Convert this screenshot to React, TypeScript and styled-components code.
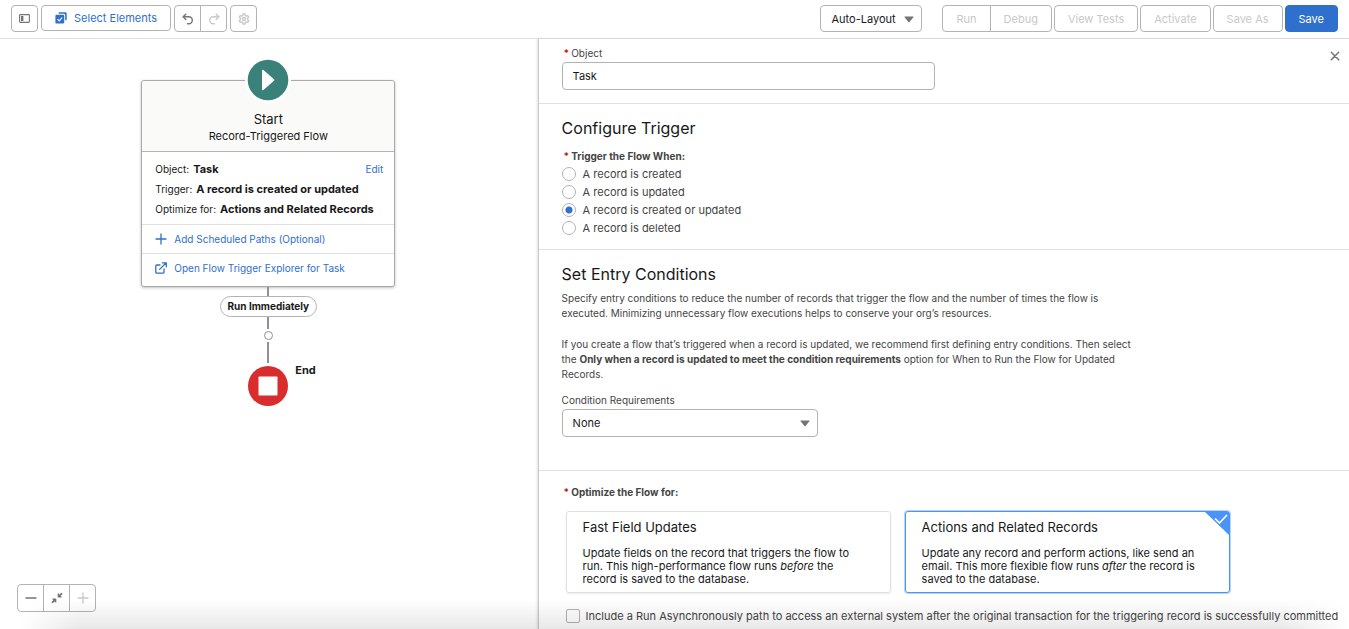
import React, { useState } from "react";
import styled, { createGlobalStyle, css } from "styled-components";

const color = {
  text: "#181818",
  muted: "#444444",
  line: "#e0e0e0",
  border: "#b3b3b3",
  disabled: "#c9c9c9",
  icon: "#747474",
  brand: "#2e70cb",
  brandLight: "#4a94f7",
  error: "#b91c1c",
};

const GlobalStyle = createGlobalStyle`
  * { box-sizing: border-box; }
  body {
    margin: 0;
    background: #fff;
    color: ${color.text};
    font-family: Inter, "Liberation Sans", sans-serif;
    font-size: 11px;
  }
  button, input, select { font: inherit; color: inherit; margin: 0; }
  h1, h2, h3, p, fieldset, legend { margin: 0; padding: 0; border: 0; font-weight: 400; }
  a { color: ${color.brand}; text-decoration: none; }
  svg { display: block; flex: none; }
`;

const Page = styled.div`
  display: flex;
  flex-direction: column;
  min-height: 100vh;
`;

const Toolbar = styled.header`
  display: flex;
  justify-content: space-between;
  gap: 12px;
  padding: 5px 11px 6px;
  border-bottom: 1px solid ${color.line};
`;

const ToolGroup = styled.div<{ $gap?: number }>`
  display: flex;
  gap: ${(p) => p.$gap ?? 3}px;
`;

const Button = styled.button<{ $brand?: boolean; $primary?: boolean; $square?: boolean }>`
  display: inline-flex;
  align-items: center;
  justify-content: center;
  gap: 7px;
  height: ${(p) => (p.$brand ? 26 : 27)}px;
  padding: 0 ${(p) => (p.$square ? 0 : 13)}px;
  ${(p) => p.$square && "width: 27px;"}
  border: 1px solid ${color.border};
  border-radius: 4px;
  background: #fff;
  color: ${(p) => (p.$brand ? color.brand : color.icon)};
  white-space: nowrap;
  &:disabled { color: ${color.disabled}; }
  ${(p) =>
    p.$primary &&
    css`
      border-color: ${color.brand};
      background: ${color.brand};
      color: #fff;
    `}
`;

const Joined = styled.div`
  display: flex;
  ${Button} { border-radius: 0; }
  ${Button}:first-child { border-radius: 4px 0 0 4px; }
  ${Button}:last-child { border-radius: 0 4px 4px 0; }
  ${Button} + ${Button} { margin-left: -1px; }
`;

const SelectWrap = styled.div<{ $width: number }>`
  position: relative;
  width: ${(p) => p.$width}px;
  max-width: 100%;
  svg {
    position: absolute;
    right: 8px;
    top: 50%;
    margin-top: -3px;
    pointer-events: none;
  }
`;

const Select = styled.select<{ $height: number }>`
  display: block;
  width: 100%;
  height: ${(p) => p.$height}px;
  padding: 0 10px;
  border: 1px solid ${color.border};
  border-radius: 4px;
  background: #fff;
  color: ${color.text};
  appearance: none;
`;

const Main = styled.main`
  display: flex;
  flex: 1;
`;

const Canvas = styled.section`
  display: flex;
  flex-direction: column;
  justify-content: space-between;
  flex: 0 0 40%;
  padding: 18px 0 17px;
`;

const Flow = styled.div`
  display: flex;
  flex-direction: column;
  align-items: center;
  padding-right: 3px;
`;

const StartBadge = styled.div`
  position: relative;
  z-index: 1;
  margin-bottom: -23px;
`;

const StartCard = styled.article`
  width: 254px;
  padding-bottom: 4px;
  border: 1px solid #a9a9a9;
  border-radius: 3px;
  background: #fff;
  box-shadow: 0 1px 3px rgba(0, 0, 0, 0.25);
`;

const StartHead = styled.div`
  padding: 29px 0 8px;
  border-bottom: 1px solid ${color.border};
  border-radius: 3px 3px 0 0;
  background: #fafaf9;
  text-align: center;
`;

const StartTitle = styled.h2`
  font-size: 13px;
  line-height: 19px;
`;

const StartSub = styled.p`
  line-height: 14px;
`;

const Facts = styled.div`
  padding: 7px 11px 5px 13px;
`;

const Fact = styled.div`
  display: flex;
  align-items: center;
  gap: 4px;
  height: 20px;
  font-size: 10px;
  white-space: nowrap;
  b { font-size: 11px; font-weight: 700; }
  a { margin-left: auto; }
`;

const CardLink = styled.a`
  display: flex;
  align-items: center;
  gap: 7px;
  height: 29px;
  padding: 0 13px;
  border-top: 1px solid ${color.line};
  font-size: 10px;
`;

const Connector = styled.div<{ $length: number }>`
  width: 2px;
  height: ${(p) => p.$length}px;
  background: #919191;
`;

const Pill = styled.div`
  height: 21px;
  padding: 0 7px;
  border: 1px solid ${color.border};
  border-radius: 11px;
  background: #fff;
  font-weight: 700;
  font-size: 10px;
  line-height: 19px;
`;

const AddDot = styled.button`
  width: 9px;
  height: 9px;
  margin: 2px 0;
  padding: 0;
  border: 1px solid #919191;
  border-radius: 50%;
  background: #fff;
`;

const EndNode = styled.div`
  display: grid;
  grid-template-columns: 1fr 40px 1fr;
  column-gap: 7px;
  width: 100%;
  margin-top: 3px;
  svg { grid-column: 2; }
`;

const EndLabel = styled.span`
  font-size: 11px;
  line-height: 14px;
  font-weight: 700;
  margin-top: -3px;
`;

const ZoomBar = styled.div`
  display: flex;
  padding-left: 17px;
  ${Button} { height: 28px; }
`;

const Panel = styled.section`
  position: relative;
  flex: 1;
  min-width: 0;
  margin-left: -2px;
  border-left: 1px solid #c9c9c9;
  box-shadow: -1px 0 2px rgba(0, 0, 0, 0.12);
`;

const Close = styled.button`
  position: absolute;
  top: 11px;
  right: 8px;
  padding: 1px;
  border: 0;
  background: none;
  color: ${color.icon};
`;

const Section = styled.section<{ $top: number; $bottom: number }>`
  padding: ${(p) => p.$top}px 23px ${(p) => p.$bottom}px;
  & + & { border-top: 1px solid ${color.line}; }
`;

const Heading = styled.h2`
  font-size: 16px;
  line-height: 24px;
`;

const FieldLabel = styled.label`
  display: block;
  margin-bottom: 2px;
  color: ${color.muted};
  font-size: 10px;
  line-height: 14px;
`;

const Star = styled.span`
  padding: 0 2px;
  color: ${color.error};
  font-weight: 700;
`;

const TextBox = styled.input`
  display: block;
  width: 373px;
  max-width: 100%;
  height: 28px;
  padding: 0 10px;
  border: 1px solid ${color.border};
  border-radius: 4px;
  background: #fff;
`;

const Legend = styled.legend<{ $top?: number; $bottom: number }>`
  padding-top: ${(p) => p.$top ?? 0}px;
  margin-bottom: ${(p) => p.$bottom}px;
  color: ${color.muted};
  font-size: 10px;
  font-weight: 700;
  line-height: 14px;
`;

const Choice = styled.label`
  display: flex;
  align-items: center;
  gap: 7px;
  height: 18px;
  color: ${color.muted};
`;

const Radio = styled.input`
  appearance: none;
  flex: none;
  width: 14px;
  height: 14px;
  border: 1px solid ${color.border};
  border-radius: 50%;
  background: #fff;
  &:checked { background: radial-gradient(circle, ${color.brand} 3px, #fff 4px); }
`;

const Checkbox = styled.input`
  appearance: none;
  flex: none;
  width: 14px;
  height: 14px;
  border: 1px solid ${color.border};
  border-radius: 2px;
  background: #fff;
  &:checked { background: ${color.brand}; }
`;

const Copy = styled.div`
  display: grid;
  gap: 16px;
  max-width: 584px;
  margin: 5px 0 11px;
  color: ${color.muted};
  font-size: 10px;
  line-height: 15px;
  b { font-weight: 700; }
`;

const Cards = styled.div`
  display: flex;
  gap: 14px;
  padding-left: 4px;
`;

const PickCard = styled.label<{ $selected: boolean }>`
  position: relative;
  flex: 0 1 325px;
  padding: 5px 16px 6px;
  border: 1px solid ${(p) => (p.$selected ? color.brandLight : color.line)};
  border-radius: 3px;
  box-shadow: ${(p) =>
    p.$selected ? `0 0 0 1px ${color.brandLight}66` : "0 1px 2px rgba(0, 0, 0, 0.08)"};
  input { position: absolute; opacity: 0; }
  svg { position: absolute; top: 0; right: 0; }
`;

const PickTitle = styled.h3`
  margin-bottom: 10px;
  font-size: 13px;
  line-height: 20px;
`;

const PickText = styled.p`
  max-width: 280px;
  font-size: 11px;
  line-height: 13px;
`;

const AsyncRow = styled.label`
  display: flex;
  align-items: center;
  gap: 6px;
  margin: 15px 0 0 4px;
  color: ${color.muted};
  line-height: 16px;
  white-space: nowrap;
`;

const BottomShade = styled.div`
  position: fixed;
  inset: auto 0 0 0;
  height: 30px;
  background: linear-gradient(rgba(0, 0, 0, 0), rgba(0, 0, 0, 0.09));
  mask-image: linear-gradient(90deg, transparent 20px, #000 80px calc(100% - 70px), transparent);
  pointer-events: none;
`;

const Caret = () => (
  <svg width="10" height="7" viewBox="0 0 10 7" aria-hidden="true">
    <path d="M1 .5h8c.5 0 .7.4.4.8L5.5 6.100a.6.6 0 0 1-1 0L.6 1.300C.3.9.5.5 1 .5z" fill={color.icon} />
  </svg>
);

const PanelIcon = () => (
  <svg width="11" height="9" viewBox="0 0 11 9" aria-hidden="true">
    <rect x=".6" y=".6" width="9.800" height="7.800" rx=".8" fill="none" stroke="currentColor" strokeWidth="1.100" />
    <rect x="2" y="2" width="2.400" height="5" fill="currentColor" />
  </svg>
);

const SelectIcon = () => (
  <svg width="12" height="12" viewBox="0 0 12 12" aria-hidden="true">
    <path d="M3.600 1.700V1.500c0-.7.5-1.200 1.200-1.200h5.500c.8 0 1.400.6 1.400 1.400v5.600c0 .7-.5 1.200-1.200 1.200h-.3V3.200c0-.8-.7-1.500-1.500-1.500z" fill="currentColor" />
    <rect x=".4" y="2.700" width="8.800" height="8.900" rx="1.300" fill="currentColor" />
    <path d="M2.600 7.200l1.600 1.700 3-3.300" fill="none" stroke="#fff" strokeWidth="1.200" />
  </svg>
);

const UndoIcon = ({ flip }: { flip?: boolean }) => (
  <svg width="12" height="12" viewBox="0 0 12 12" aria-hidden="true">
    <g transform={flip ? "matrix(-1 0 0 1 12 0)" : undefined} fill="none" stroke="currentColor" strokeWidth="1.400" strokeLinecap="round" strokeLinejoin="round">
      <path d="M3.800 1.200L1.200 3.800l2.600 2.600" />
      <path d="M1.400 3.800h5.400a3.500 3.500 0 0 1 0 7H5.500" />
    </g>
  </svg>
);

const GearIcon = () => (
  <svg width="12" height="12" viewBox="0 0 12 12" fill="none" stroke="currentColor" aria-hidden="true">
    <circle cx="6" cy="6" r="1.500" strokeWidth="1.400" />
    <path d="M5 1h2l.3 1.500 1 .6 1.500-.5 1 1.700-1.200 1v1.400l1.200 1-1 1.700-1.500-.5-1 .6L7 11H5l-.3-1.500-1-.6-1.500.5-1-1.700 1.200-1V5.300l-1.200-1 1-1.700 1.500.5 1-.6z" strokeWidth="1.400" strokeLinejoin="round" />
  </svg>
);

const PlusIcon = () => (
  <svg width="12" height="12" viewBox="0 0 12 12" aria-hidden="true">
    <path d="M6 1v10M1 6h10" stroke="currentColor" strokeWidth="1.300" strokeLinecap="round" />
  </svg>
);

const MinusIcon = () => (
  <svg width="12" height="12" viewBox="0 0 12 12" aria-hidden="true">
    <path d="M1 6h10" stroke="currentColor" strokeWidth="1.400" strokeLinecap="round" />
  </svg>
);

const FitIcon = () => (
  <svg width="12" height="12" viewBox="0 0 12 12" fill="currentColor" aria-hidden="true">
    <path d="M6.700 1.800v3.100c0 .3.200.5.500.5h3.100c.4 0 .5-.4.3-.7l-.9-.9 1.600-1.600c.3-.3.300-.5 0-.8l-.5-.4c-.3-.3-.5-.3-.7 0L8.400 2.500l-1-1c-.3-.3-.7-.1-.7.3z" />
    <path d="M5.300 10.200V7.100c0-.3-.2-.5-.5-.5H1.700c-.4 0-.5.4-.3.7l.9.900L.7 9.800c-.3.3-.3.5 0 .8l.5.4c.3.3.5.3.7 0l1.700-1.500 1 1c.3.3.7.1.7-.3z" />
  </svg>
);

const ExternalIcon = () => (
  <svg width="12" height="12" viewBox="0 0 12 12" fill="none" stroke="currentColor" strokeWidth="1.300" strokeLinecap="round" strokeLinejoin="round" aria-hidden="true">
    <path d="M5 3H1.800c-.6 0-1 .4-1 1v6.200c0 .6.4 1 1 1H8c.6 0 1-.4 1-1V7" />
    <path d="M7.300.8h4v4M11 1L4.600 7.400" />
  </svg>
);

const CloseIcon = () => (
  <svg width="10" height="10" viewBox="0 0 10 10" aria-hidden="true">
    <path d="M1.300 1.300l7.400 7.400M8.700 1.300L1.300 8.700" stroke="currentColor" strokeWidth="1.500" strokeLinecap="round" />
  </svg>
);

const PlayBadge = () => (
  <svg width="46" height="46" viewBox="0 0 46 46" aria-hidden="true">
    <circle cx="23" cy="23" r="23" fill="#fff" />
    <circle cx="23" cy="23" r="20.300" fill="#3a8279" />
    <path d="M17 13.700v18.600c0 .9.800 1.200 1.400.7l10.600-9.200c.5-.5.5-1.100 0-1.600L18.400 13c-.6-.5-1.400-.2-1.400.7z" fill="#fff" />
  </svg>
);

const StopBadge = () => (
  <svg width="40" height="40" viewBox="0 0 40 40" aria-hidden="true">
    <circle cx="20" cy="20" r="20" fill="#d92d2d" />
    <rect x="10.500" y="10.500" width="19" height="19" rx=".8" fill="#fff" />
  </svg>
);

const SelectedCorner = () => (
  <svg width="24" height="23" viewBox="0 0 24 23" aria-hidden="true">
    <path d="M0 0h24v23z" fill={color.brandLight} />
    <path d="M10.500 7l4 4L21.500 3.500" fill="none" stroke="#fff" strokeWidth="1.700" strokeLinecap="round" strokeLinejoin="round" />
  </svg>
);

const triggers = [
  "A record is created",
  "A record is updated",
  "A record is created or updated",
  "A record is deleted",
];

const modes = [
  {
    title: "Fast Field Updates",
    text: (
      <>
        Update fields on the record that triggers the flow to run. This high-performance flow runs{" "}
        <em>before</em> the record is saved to the database.
      </>
    ),
  },
  {
    title: "Actions and Related Records",
    text: (
      <>
        Update any record and perform actions, like send an email. This more flexible flow runs{" "}
        <em>after</em> the record is saved to the database.
      </>
    ),
  },
];

export default function App() {
  const [trigger, setTrigger] = useState(2);
  const [mode, setMode] = useState(1);

  return (
    <Page>
      <GlobalStyle />
      <Toolbar>
        <ToolGroup>
          <Button $square aria-label="Toggle toolbox"><PanelIcon /></Button>
          <Button $brand><SelectIcon />Select Elements</Button>
          <Joined>
            <Button $square aria-label="Undo"><UndoIcon /></Button>
            <Button $square disabled aria-label="Redo"><UndoIcon flip /></Button>
          </Joined>
          <Button $square disabled aria-label="Settings"><GearIcon /></Button>
        </ToolGroup>
        <ToolGroup $gap={20}>
          <SelectWrap $width={102}>
            <Select $height={27} aria-label="Layout mode" defaultValue="auto">
              <option value="auto">Auto-Layout</option>
              <option value="free">Free-Form</option>
            </Select>
            <Caret />
          </SelectWrap>
          <ToolGroup $gap={2}>
            <Joined>
              <Button disabled>Run</Button>
              <Button disabled>Debug</Button>
            </Joined>
            <Button disabled>View Tests</Button>
            <Button disabled>Activate</Button>
            <Button disabled>Save As</Button>
            <Button $primary>Save</Button>
          </ToolGroup>
        </ToolGroup>
      </Toolbar>

      <Main>
        <Canvas>
          <Flow>
            <StartBadge><PlayBadge /></StartBadge>
            <StartCard>
              <StartHead>
                <StartTitle>Start</StartTitle>
                <StartSub>Record-Triggered Flow</StartSub>
              </StartHead>
              <Facts>
                <Fact>Object: <b>Task</b><a href="#edit">Edit</a></Fact>
                <Fact>Trigger: <b>A record is created or updated</b></Fact>
                <Fact>Optimize for: <b>Actions and Related Records</b></Fact>
              </Facts>
              <CardLink href="#paths"><PlusIcon />Add Scheduled Paths (Optional)</CardLink>
              <CardLink href="#explorer"><ExternalIcon />Open Flow Trigger Explorer for Task</CardLink>
            </StartCard>
            <Connector $length={9} />
            <Pill>Run Immediately</Pill>
            <Connector $length={12} />
            <AddDot aria-label="Add element" />
            <Connector $length={21} />
            <EndNode><StopBadge /><EndLabel>End</EndLabel></EndNode>
          </Flow>
          <ZoomBar>
            <Joined>
              <Button $square aria-label="Zoom out"><MinusIcon /></Button>
              <Button $square aria-label="Zoom to fit"><FitIcon /></Button>
              <Button $square disabled aria-label="Zoom in"><PlusIcon /></Button>
            </Joined>
          </ZoomBar>
        </Canvas>

        <Panel>
          <Close aria-label="Close"><CloseIcon /></Close>
          <Section $top={7} $bottom={13}>
            <FieldLabel htmlFor="object"><Star>*</Star>Object</FieldLabel>
            <TextBox id="object" defaultValue="Task" />
          </Section>

          <Section $top={12} $bottom={12}>
            <Heading>Configure Trigger</Heading>
            <fieldset>
              <Legend $top={9} $bottom={2}><Star>*</Star>Trigger the Flow When:</Legend>
              {triggers.map((label, i) => (
                <Choice key={label}>
                  <Radio type="radio" name="trigger" checked={trigger === i} onChange={() => setTrigger(i)} />
                  {label}
                </Choice>
              ))}
            </fieldset>
          </Section>

          <Section $top={12} $bottom={33}>
            <Heading>Set Entry Conditions</Heading>
            <Copy>
              <p>
                Specify entry conditions to reduce the number of records that trigger the flow and the number of times
                the flow is executed. Minimizing unnecessary flow executions helps to conserve your org’s resources.
              </p>
              <p>
                If you create a flow that’s triggered when a record is updated, we recommend first defining entry
                conditions. Then select the <b>Only when a record is updated to meet the condition requirements</b>{" "}
                option for When to Run the Flow for Updated Records.
              </p>
            </Copy>
            <FieldLabel htmlFor="conditions">Condition Requirements</FieldLabel>
            <SelectWrap $width={256}>
              <Select id="conditions" $height={28} defaultValue="none">
                <option value="none">None</option>
                <option value="all">All Conditions Are Met (AND)</option>
              </Select>
              <Caret />
            </SelectWrap>
          </Section>

          <Section $top={14} $bottom={0}>
            <fieldset>
              <Legend $bottom={12}><Star>*</Star>Optimize the Flow for:</Legend>
              <Cards>
                {modes.map((m, i) => (
                  <PickCard key={m.title} $selected={mode === i}>
                    <input type="radio" name="mode" checked={mode === i} onChange={() => setMode(i)} />
                    <PickTitle>{m.title}</PickTitle>
                    <PickText>{m.text}</PickText>
                    {mode === i && <SelectedCorner />}
                  </PickCard>
                ))}
              </Cards>
            </fieldset>
            <AsyncRow>
              <Checkbox type="checkbox" />
              Include a Run Asynchronously path to access an external system after the original transaction for the
              triggering record is successfully committed
            </AsyncRow>
          </Section>
        </Panel>
      </Main>
      <BottomShade />
    </Page>
  );
}
